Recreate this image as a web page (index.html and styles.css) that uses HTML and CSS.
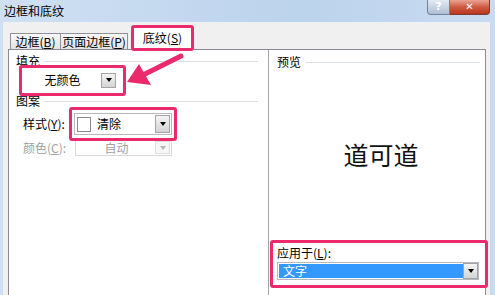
FILE: index.html
```html
<!DOCTYPE html>
<html lang="zh-CN">
<head>
<meta charset="UTF-8">
<title>边框和底纹</title>
<link rel="stylesheet" href="styles.css">
</head>
<body>
<div class="window">
    <div class="titlebar">
        <span class="title">边框和底纹</span>
        <div class="controls">
            <span class="btn-help">?</span>
            <span class="btn-close">✕</span>
        </div>
    </div>
    <div class="frame">
        <div class="client">
            <!-- pestañas -->
            <div class="tabs">
                <span class="tab tab-first">边框(<u>B</u>)</span>
                <span class="tab tab-second">页面边框(<u>P</u>)</span>
                <span class="mark mark-tab"><span class="tab-active">底纹(<u>S</u>)</span></span>
            </div>
            <div class="panel">
                <div class="col-left">
                    <div class="legend">填充</div>
                    <div class="mark mark-fill">
                        <div class="color-btn">
                            <span class="combo-text center">无颜色</span>
                            <span class="drop"></span>
                        </div>
                    </div>
                    <div class="legend legend-pattern">图案</div>
                    <div class="row">
                        <label>样式(<u>Y</u>):</label>
                        <div class="mark mark-style">
                            <div class="combo">
                                <span class="swatch"></span>
                                <span class="combo-text">清除</span>
                                <span class="drop"></span>
                            </div>
                        </div>
                    </div>
                    <div class="row row-disabled">
                        <label>颜色(<u>C</u>):</label>
                        <div class="combo combo-disabled">
                            <span class="combo-text center">自动</span>
                            <span class="drop"></span>
                        </div>
                    </div>
                </div>
                <div class="col-right">
                    <div class="legend legend-preview">预览</div>
                    <div class="preview">道可道</div>
                    <div class="mark mark-apply">
                        <label>应用于(<u>L</u>):</label>
                        <div class="combo combo-apply">
                            <span class="selected">文字</span>
                            <span class="drop"></span>
                        </div>
                    </div>
                </div>
            </div>
        </div>
    </div>
    <svg class="arrow" viewBox="0 0 495 295" width="495" height="295">
        <line x1="181" y1="56" x2="143" y2="75" stroke="#eb2a6c" stroke-width="5" stroke-linecap="round"/>
        <polygon points="127,82 139,64 151,85" fill="#eb2a6c"/>
    </svg>
</div>
</body>
</html>
```

FILE: styles.css
```css
/* Ventana */
* {
    box-sizing: border-box;
}

body {
    margin: 0;
    font-family: "Noto Sans CJK SC", "Noto Sans", sans-serif;
    font-size: 12px;
    color: #000;
    overflow: hidden;
}

u {
    text-decoration: underline;
}

.window {
    position: relative;
    width: 495px;
    height: 295px;
    display: flex;
    flex-direction: column;
    background: linear-gradient(90deg, #cfe0f3, #bcd3ec 60%, #c8dbf0);
    overflow: hidden;
}

.titlebar {
    height: 22px;
    flex-shrink: 0;
    display: flex;
    align-items: flex-start;
}

.title {
    padding: 4px 0 0 4px;
    line-height: 14px;
}

.controls {
    margin-left: auto;
    margin-right: 5px;
    display: flex;
}

.btn-help {
    width: 23px;
    height: 15px;
    border: 1px solid #71839d;
    border-top: 0;
    border-radius: 0 0 0 4px;
    background: linear-gradient(#e3eaf2, #aebfd3);
    color: #fff;
    font: bold 11px/14px "DejaVu Sans", sans-serif;
    text-align: center;
}

.btn-close {
    width: 40px;
    height: 15px;
    border: 1px solid #7a3b30;
    border-top: 0;
    border-left: 0;
    border-radius: 0 0 4px 0;
    background: linear-gradient(#e9a493, #cf5a43 50%, #b9351f);
    color: #fff;
    font: bold 10px/14px "DejaVu Sans", sans-serif;
    text-align: center;
}

.frame {
    flex: 1;
    display: flex;
    padding: 0 5px 0 3px;
}

.client {
    flex: 1;
    background: #f0f0f0;
    padding: 0 4px 0 5px;
    display: flex;
    flex-direction: column;
}

/* Pestañas */
.tabs {
    height: 27px;
    flex-shrink: 0;
    display: flex;
    align-items: flex-end;
    padding-left: 2px;
}

.tab {
    height: 16px;
    border: 1px solid #8e9097;
    border-bottom: 0;
    background: linear-gradient(#f8f8f8, #e2e2e2);
    line-height: 15px;
    text-align: center;
}

.tab-first {
    width: 51px;
}

.tab-second {
    width: 68px;
    margin-left: -1px;
}

.mark {
    border: 3px solid #eb2a6c;
    border-radius: 3px;
    position: relative;
    z-index: 1;
}

.mark-tab {
    width: 63px;
    height: 26px;
    margin-left: 3px;
    margin-bottom: -2px;
    display: flex;
    background: #fff;
}

.tab-active {
    flex: 1;
    background: #fff;
    text-align: center;
    line-height: 16px;
    padding-top: 2px;
}

.panel {
    height: 250px;
    flex-shrink: 0;
    display: flex;
    border: 1px solid #898c95;
    background: #fff;
}

/* Columna izquierda */
.col-left {
    width: 259px;
    padding: 5px 10px 0 7px;
}

.legend {
    display: flex;
    align-items: center;
    height: 12px;
    line-height: 12px;
}

.legend::after {
    content: "";
    flex: 1;
    height: 1px;
    margin-left: 5px;
    background: #dadfe4;
}

.mark-fill {
    width: 107px;
    margin: -2px 0 0 3px;
    padding: 2px 4px 3px 2px;
}

.color-btn {
    height: 20px;
    display: flex;
    align-items: center;
    padding-right: 3px;
}

.combo-text {
    flex: 1;
    line-height: 14px;
}

.center {
    text-align: center;
}

.drop {
    width: 15px;
    height: 15px;
    border: 1px solid #a4a4a4;
    background: linear-gradient(#f4f4f4, #d4d4d4);
    display: flex;
    align-items: center;
    justify-content: center;
}

.drop::before {
    content: "";
    border-left: 3px solid transparent;
    border-right: 3px solid transparent;
    border-top: 4px solid #000;
}

.legend-pattern {
    margin-top: -1px;
}

.row {
    display: flex;
    align-items: center;
    padding-left: 7px;
}

.row label {
    width: 46px;
    line-height: 14px;
}

.mark-style {
    padding: 3px 2px;
}

.combo {
    width: 98px;
    height: 22px;
    display: flex;
    align-items: center;
    border: 1px solid #b5b8be;
    background: #fff;
    padding: 0 1px 0 2px;
}

.mark-style .drop {
    height: 18px;
}

.swatch {
    width: 14px;
    height: 15px;
    border: 1px solid #8a8a8a;
    margin-right: 6px;
}

.row-disabled {
    margin-top: -2px;
    color: #a0a0a0;
}

.combo-disabled {
    width: 97px;
    height: 17px;
    margin-left: 6px;
    border-color: #d9d9d9;
    color: #a0a0a0;
}

.combo-disabled .drop {
    height: 13px;
    border-color: #e0e0e0;
    background: #f6f6f6;
}

.combo-disabled .drop::before {
    border-top-color: #b4b4b4;
}

/* Columna derecha */
.col-right {
    flex: 1;
    border-left: 1px solid #a3a3a3;
    padding-top: 6px;
    display: flex;
    flex-direction: column;
}

.legend-preview {
    padding: 0 5px 0 8px;
}

.preview {
    height: 172px;
    display: flex;
    align-items: center;
    justify-content: center;
    padding-left: 8px;
    font-size: 25px;
    color: #111;
}

.mark-apply {
    margin: 0 -3px 0 1px;
    padding: 4px 6px 5px 4px;
}

.mark-apply label {
    display: block;
    line-height: 12px;
}

.combo-apply {
    width: auto;
    height: 18px;
    margin-top: 3px;
    padding: 1px;
}

.selected {
    flex: 1;
    height: 14px;
    background: #3399ff;
    color: #fff;
    line-height: 14px;
    padding-left: 4px;
}

.combo-apply .drop {
    height: 16px;
    margin-right: -1px;
}

.arrow {
    position: absolute;
    left: 0;
    top: 0;
    z-index: 2;
    pointer-events: none;
}
```
